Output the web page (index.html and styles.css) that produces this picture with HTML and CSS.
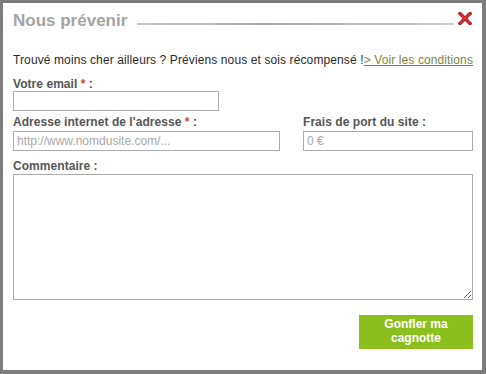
FILE: index.html
```html
<!DOCTYPE html>
<html lang="fr">
<head>
<meta charset="utf-8">
<title>Nous prévenir</title>
<link rel="stylesheet" href="styles.css">
</head>
<body>
<div class="dialog">
  <div class="head">
    <h1 class="title">Nous prévenir</h1>
    <span class="rule"></span>
    <svg class="close" width="14" height="13" viewBox="0 0 14 13" aria-label="Fermer">
      <path d="M2 1.5 L12 11.5 M12 1.5 L2 11.5" stroke="#b51f22" stroke-width="3.4" stroke-linecap="square" fill="none"/>
      <path d="M2.5 2 L11.5 11 M11.5 2 L2.5 11" stroke="#d9353a" stroke-width="1.4" stroke-linecap="square" fill="none"/>
    </svg>
  </div>
  <p class="intro">Trouvé moins cher ailleurs ? Préviens nous et sois récompensé !<a href="#" class="link">&gt; Voir les conditions</a></p>
  <div class="field email">
    <label class="label">Votre email<span class="req"> * </span>:</label>
    <input class="input w-email" type="text">
  </div>
  <div class="row">
    <div class="field">
      <label class="label">Adresse internet de l'adresse<span class="req"> * </span>:</label>
      <input class="input w-url" type="text" placeholder="http://www.nomdusite.com/...">
    </div>
    <div class="field">
      <label class="label">Frais de port du site :</label>
      <input class="input w-port" type="text" placeholder="0 €">
    </div>
  </div>
  <div class="field comment">
    <label class="label">Commentaire :</label>
    <textarea class="area"></textarea>
  </div>
  <div class="actions">
    <button class="btn" type="button">Gonfler ma<br>cagnotte</button>
  </div>
</div>
</body>
</html>
```
FILE: styles.css
```css
html, body {
  margin: 0;
  padding: 0;
  background: #7d7d7d;
  height: 100%;
}
body {
  font-family: "Liberation Sans", Arial, sans-serif;
  font-size: 12px;
  overflow: hidden;
}
.dialog {
  background: #fff;
  margin: 3px 0 0 3px;
  width: 479px;
  height: 367px;
  box-sizing: border-box;
  padding: 8px 10px 0 10px;
  display: flex;
  flex-direction: column;
}
.head {
  display: flex;
  align-items: flex-start;
  height: 20px;
}
.title {
  margin: 0;
  font-size: 17px;
  line-height: 20px;
  font-weight: bold;
  color: #a4a4a4;
  white-space: nowrap;
}
.rule {
  flex: 1;
  height: 2px;
  margin: 12px 4px 0 10px;
  background: linear-gradient(to right, #c8c8c8, #a9a9a9 40%, #bdbdbd 80%, #d0d0d0);
}
.close {
  margin-top: 1px;
  flex: none;
}
.intro {
  margin: 22px 0 0 0;
  line-height: 14px;
  color: #2b2b2b;
  white-space: nowrap;
  letter-spacing: 0.11px;
}
.link {
  color: #7a8540;
  text-decoration: underline;
}
.field {
  display: flex;
  flex-direction: column;
}
.email {
  margin-top: 11px;
}
.label {
  font-weight: bold;
  color: #555;
  line-height: 13px;
  letter-spacing: 0.05px;
}
.req {
  color: #d24a3a;
}
.input {
  box-sizing: border-box;
  height: 20px;
  margin: 0;
  border: 1px solid #ababab;
  padding: 0 3px;
  font-family: "Liberation Sans", Arial, sans-serif;
  font-size: 12px;
  color: #333;
  background: #fff;
  outline: none;
}
.input::placeholder {
  color: #a8a8a8;
}
.w-email { width: 206px; }
.w-url { width: 267px; }
.w-port { width: 170px; }
.row {
  display: flex;
  gap: 23px;
  margin-top: 5px;
}
.row .label {
  margin-bottom: 2px;
}
.comment {
  margin-top: 9px;
}
.comment .label {
  margin-bottom: 1px;
}
.area {
  box-sizing: border-box;
  width: 460px;
  height: 126px;
  margin: 0;
  border: 1px solid #ababab;
  resize: both;
  font-family: "Liberation Sans", Arial, sans-serif;
}
.actions {
  display: flex;
  justify-content: flex-end;
  margin-top: 15px;
}
.btn {
  width: 114px;
  height: 34px;
  border: 0;
  background: #8bbf1d;
  color: #fff;
  font-family: "Liberation Sans", Arial, sans-serif;
  font-weight: bold;
  font-size: 12px;
  line-height: 14px;
  padding: 0 0 2px 0;
  margin-right: -1px;
  text-align: center;
}
```
